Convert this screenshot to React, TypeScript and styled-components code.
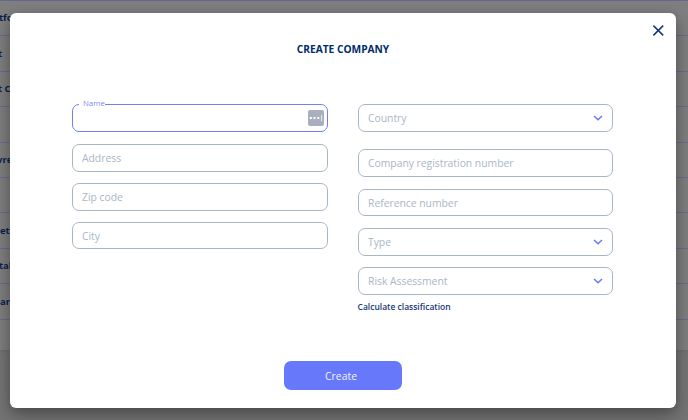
import React from 'react';
import styled, { createGlobalStyle } from 'styled-components';

const GlobalStyle = createGlobalStyle`
  * { box-sizing: border-box; }
  html, body, #root { height: 100%; }
  body {
    margin: 0;
    overflow: hidden;
    background: #6f6f6f;
    font-family: 'Open Sans', 'Noto Sans', sans-serif;
  }
`;

const Page = styled.div`
  position: relative;
  height: 420px;
  overflow: hidden;
  background: #757575;
`;

const Table = styled.div`
  height: 350px;
  overflow: hidden;
  background: #7f7f7f;
  border-top: 1px solid #666791;
  box-shadow: 0 1px 3px rgba(0, 0, 0, 0.08);
`;

const TableRow = styled.div<{ $height: number; $shift: number }>`
  height: ${(p) => p.$height}px;
  text-indent: ${(p) => p.$shift}px;
  border-bottom: 1px solid #6b6b93;
  color: #0b1f50;
  font-size: 9.5px;
  font-weight: 700;
  line-height: ${(p) => p.$height - 1}px;
  white-space: nowrap;

  &:last-child { border-bottom: 0; }
`;

const Overlay = styled.div`
  position: absolute;
  inset: 0;
  padding: 13px 12px 12px 10px;
`;

const Dialog = styled.section`
  display: flex;
  flex-direction: column;
  align-items: center;
  height: 395px;
  border-radius: 6px;
  background: #fff;
  box-shadow: 0 8px 20px rgba(0, 0, 0, 0.3), 0 2px 8px rgba(0, 0, 0, 0.14);
`;

const Header = styled.header`
  display: flex;
  align-self: stretch;
  justify-content: flex-end;
  height: 28px;
  padding: 11px 12px 0 0;
`;

const CloseButton = styled.button`
  display: flex;
  width: 12px;
  height: 12px;
  padding: 0;
  border: 0;
  background: none;
`;

const Title = styled.h1`
  margin: 0;
  color: #002b6b;
  font-size: 10.2px;
  font-weight: 700;
  line-height: 16px;
`;

const Form = styled.form`
  display: grid;
  grid-template-columns: 256px 255px;
  column-gap: 30px;
  align-items: start;
  align-self: flex-start;
  height: 257px;
  margin: 47px 0 0 62px;
`;

const Column = styled.div`
  display: flex;
  flex-direction: column;
`;

const Field = styled.div<{ $active?: boolean; $height?: number; $gap?: number }>`
  position: relative;
  display: flex;
  align-items: center;
  justify-content: space-between;
  height: ${(p) => p.$height ?? 28}px;
  margin-bottom: ${(p) => p.$gap ?? 12}px;
  padding: 0 9px;
  border: 1px solid ${(p) => (p.$active ? '#7280f5' : '#a8b7c6')};
  border-radius: 7px;
  color: #a9b7c6;
  font-size: 10.4px;
  letter-spacing: -0.03px;
  line-height: 14px;
`;

const FloatingLabel = styled.label`
  position: absolute;
  top: -7px;
  left: 6px;
  padding: 0 0 0 4px;
  background: #fff;
  color: #7e8bf7;
  font-size: 7.8px;
  letter-spacing: 0;
  line-height: 11px;
`;

const AutofillBadge = styled.span`
  display: flex;
  width: 16px;
  height: 16px;
  margin: 0 -6px 0 auto;
`;

const Chevron = styled.svg`
  width: 10px;
  height: 6px;
`;

const CalculateLink = styled.a`
  margin: 1px 0 0 -0.5px;
  color: #173777;
  font-size: 8.5px;
  font-weight: 600;
  line-height: 12px;
`;

const SubmitButton = styled.button`
  width: 118px;
  height: 29px;
  padding: 0 4px 0 0;
  border: 0;
  border-radius: 7px;
  background: #6778fa;
  color: #f2f4ff;
  font: 400 10.4px/30px 'Open Sans', 'Noto Sans', sans-serif;
  letter-spacing: 0.05px;
`;

const rows = [
  { height: 35, text: 'tfo', shift: -1 },
  { height: 36, text: 't', shift: -2 },
  { height: 35, text: 't C', shift: -2 },
  { height: 36, text: '', shift: 0 },
  { height: 35, text: 'vre', shift: -3 },
  { height: 35, text: '', shift: 0 },
  { height: 36, text: 'et', shift: 0 },
  { height: 35, text: 'tab', shift: -1 },
  { height: 36, text: 'are', shift: 0 },
  { height: 30, text: '', shift: 0 },
];

function Select({ label, height, gap }: { label: string; height?: number; gap?: number }) {
  return (
    <Field $height={height} $gap={gap}>
      {label}
      <Chevron viewBox="0 0 10 6" fill="none" stroke="#6677fa" strokeWidth="1.5">
        <path d="M1 1 5 4.8 9 1" />
      </Chevron>
    </Field>
  );
}

export default function App() {
  return (
    <Page>
      <GlobalStyle />
      <Table>
        {rows.map((row, i) => (
          <TableRow key={i} $height={row.height} $shift={row.shift}>{row.text}</TableRow>
        ))}
      </Table>
      <Overlay>
        <Dialog role="dialog" aria-label="Create company">
          <Header>
            <CloseButton type="button" aria-label="Close">
              <svg width="12" height="12" viewBox="0 0 12 12" fill="none" stroke="#14387c" strokeWidth="1.5">
                <path d="M1.4 1.6 11.2 11.4M11.2 1.6 1.4 11.4" />
              </svg>
            </CloseButton>
          </Header>
          <Title>CREATE COMPANY</Title>
          <Form>
            <Column>
              <Field $active>
                <FloatingLabel>Name</FloatingLabel>
                <AutofillBadge>
                  <svg width="16" height="16" viewBox="0 0 16 16">
                    <rect width="16" height="16" rx="2" fill="#a8afbf" />
                    <path d="M1.8 7.1h2v2h-2zM5.5 7.1h2v2h-2zM9.3 7.1h2v2h-2zM13.3 5h.8v6.2h-.8z" fill="#fff" />
                  </svg>
                </AutofillBadge>
              </Field>
              <Field $gap={11}>Address</Field>
              <Field $gap={11}>Zip code</Field>
              <Field $height={27}>City</Field>
            </Column>
            <Column>
              <Select label="Country" gap={17} />
              <Field>Company registration number</Field>
              <Field $height={27}>Reference number</Field>
              <Select label="Type" gap={11} />
              <Select label="Risk Assessment" gap={5} />
              <CalculateLink>Calculate classification</CalculateLink>
            </Column>
          </Form>
          <SubmitButton type="button">Create</SubmitButton>
        </Dialog>
      </Overlay>
    </Page>
  );
}
